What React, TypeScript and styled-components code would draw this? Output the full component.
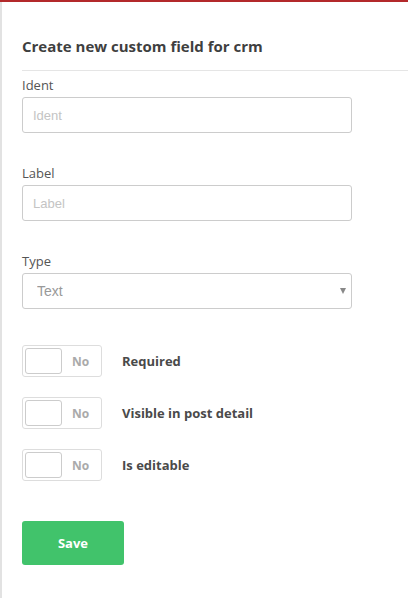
import React from "react";
import styled, { createGlobalStyle } from "styled-components";

const Global = createGlobalStyle`
  html, body { margin: 0; padding: 0; background: #fff; }
  body { font-family: "Open Sans", "Liberation Sans", sans-serif; }
  * { box-sizing: border-box; }
`;

const TopBar = styled.div`
  height: 2px;
  background: #b3292b;
`;

const Page = styled.div`
  border-left: 2px solid #e2e2e2;
  min-height: 596px;
  padding-left: 20px;
`;

const Title = styled.h3`
  margin: 0;
  padding-top: 34px;
  padding-bottom: 14px;
  font-size: 15px;
  line-height: 20px;
  font-weight: 700;
  color: #3f3f3f;
  border-bottom: 1px solid #e5e5e5;
`;

const Form = styled.div`
  width: 330px;
  padding-top: 4px;
`;

const Field = styled.div<{ $gap: number }>`
  display: flex;
  flex-direction: column;
  margin-bottom: ${(p) => p.$gap}px;
`;

const Label = styled.label`
  font-size: 13px;
  line-height: 20px;
  color: #555;
  margin-bottom: 2px;
`;

const Input = styled.input`
  height: 36px;
  width: 330px;
  border: 1px solid #ccc;
  border-radius: 3px;
  padding: 0 10px;
  font-family: "Liberation Sans", Arial, sans-serif;
  font-size: 13px;
  color: #555;
  outline: none;
  &::placeholder { color: #c4c4c4; }
`;

const SelectWrap = styled.div`
  position: relative;
  width: 330px;
`;

const Select = styled.select`
  appearance: none;
  -webkit-appearance: none;
  height: 36px;
  width: 330px;
  border: 1px solid #ccc;
  border-radius: 3px;
  background: #fff;
  padding: 0 14px;
  font-family: "Liberation Sans", Arial, sans-serif;
  font-size: 14px;
  color: #999;
  outline: none;
`;

const Arrow = styled.span`
  position: absolute;
  right: 6px;
  top: 15px;
  width: 0;
  height: 0;
  border-left: 3.5px solid transparent;
  border-right: 3.5px solid transparent;
  border-top: 6px solid #888;
  pointer-events: none;
`;

const Toggles = styled.div`
  display: flex;
  flex-direction: column;
  gap: 20px;
  margin-top: 36px;
`;

const ToggleRow = styled.div`
  display: flex;
  align-items: center;
  gap: 20px;
`;

const Switch = styled.div`
  width: 80px;
  height: 32px;
  border: 1px solid #ddd;
  border-radius: 3px;
  display: flex;
  align-items: center;
  padding: 0 2px;
`;

const Knob = styled.div`
  width: 37px;
  height: 26px;
  border: 1px solid #ccc;
  border-radius: 3px;
  background: #fff;
`;

const SwitchText = styled.span`
  flex: 1;
  text-align: center;
  font-size: 12px;
  font-weight: 700;
  color: #aaa;
`;

const ToggleLabel = styled.span`
  font-size: 13px;
  font-weight: 700;
  color: #4a4a4a;
`;

const SaveButton = styled.button`
  margin-top: 40px;
  width: 102px;
  height: 44px;
  border: none;
  border-radius: 3px;
  background: #41c36b;
  color: #fff;
  font-family: "Open Sans", sans-serif;
  font-size: 13px;
  font-weight: 700;
`;

const toggles = ["Required", "Visible in post detail", "Is editable"];

export default function App() {
  return (
    <>
      <Global />
      <TopBar />
      <Page>
        <Title>Create new custom field for crm</Title>
        <Form>
          <Field $gap={30}>
            <Label>Ident</Label>
            <Input placeholder="Ident" />
          </Field>
          <Field $gap={30}>
            <Label>Label</Label>
            <Input placeholder="Label" />
          </Field>
          <Field $gap={0}>
            <Label>Type</Label>
            <SelectWrap>
              <Select defaultValue="text">
                <option value="text">Text</option>
              </Select>
              <Arrow />
            </SelectWrap>
          </Field>
          <Toggles>
            {toggles.map((t) => (
              <ToggleRow key={t}>
                <Switch>
                  <Knob />
                  <SwitchText>No</SwitchText>
                </Switch>
                <ToggleLabel>{t}</ToggleLabel>
              </ToggleRow>
            ))}
          </Toggles>
          <SaveButton>Save</SaveButton>
        </Form>
      </Page>
    </>
  );
}
